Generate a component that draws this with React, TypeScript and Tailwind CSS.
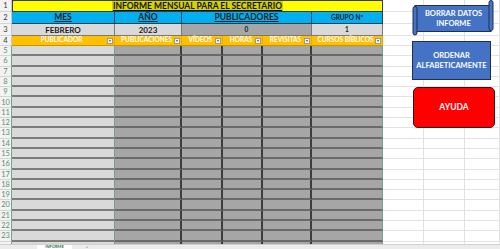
import React from "react"

const font = "font-['Lato','Liberation_Sans',sans-serif]"

const RowHead = ({ n, hi }: { n?: number; hi?: boolean }) => (
  <div
    className={
      hi
        ? "flex items-center justify-center bg-[#f3f3f3] border-b border-b-[#d4d4d4] border-r border-r-[#6fa585] text-[7.5px] text-[#5c8d72]"
        : "flex items-center justify-center bg-[#f3f3f3] border-b border-b-[#d4d4d4] border-r border-r-[#c6c6c6] text-[7.5px] text-[#3a3a3a]"
    }
  >
    {n}
  </div>
)

const White = () => <div className="bg-white border-b border-r border-[#e2e2e2]" />

const FilterBtn = () => (
  <span className="absolute right-[1px] top-1/2 -translate-y-1/2 w-[6px] h-[6px] bg-[#f2f2f2] border border-[#9a9a9a] flex items-center justify-center">
    <span className="block w-0 h-0 border-l-[1.5px] border-r-[1.5px] border-t-[2px] border-l-transparent border-r-transparent border-t-[#555]" />
  </span>
)

const OrangeHead = ({ label }: { label: string }) => (
  <div className="relative flex items-center justify-center pr-[3px] bg-[#ffc000] border-b border-b-[#c79600] border-r border-r-[#e8ad00] text-[6.5px] font-bold text-white leading-none">
    <span>{label}</span>
    <FilterBtn />
  </div>
)

const DataRow = ({ n }: { n?: number }) => (
  <>
    <RowHead n={n} hi />
    <div className="bg-[#d9d9d9] border-b-2 border-b-[#7b7b7b] border-r border-r-[#6fa585]" />
    <div className="bg-[#a6a6a6] border-b-2 border-b-[#6a6a6a] border-r-2 border-r-[#3c3c3c]" />
    <div className="bg-[#a6a6a6] border-b-2 border-b-[#6a6a6a] border-r-2 border-r-[#3c3c3c]" />
    <div className="bg-[#a6a6a6] border-b-2 border-b-[#6a6a6a] border-r-2 border-r-[#3c3c3c]" />
    <div className="bg-[#a6a6a6] border-b-2 border-b-[#6a6a6a] border-r-2 border-r-[#3c3c3c]" />
    <div className="bg-[#a6a6a6] border-b-2 border-b-[#6a6a6a] border-r border-r-[#6fa585]" />
    <White />
    <White />
    <White />
  </>
)

const rows = Array.from({ length: 19 }, (_, i) => i + 5)

export default function App() {
  return (
    <div className={`w-[500px] h-[249px] overflow-hidden bg-white flex flex-col ${font}`}>
      <div className="relative h-[244px] overflow-hidden">
        <div className="grid grid-cols-[12px_103px_67px_41px_40px_49px_71px_41px_41px_1fr] grid-rows-[12px_12px_12px_10px] auto-rows-[10.3px]">
          {/* row 1 */}
          <RowHead n={1} />
          <div className="col-span-6 flex items-center justify-center bg-[#ffff00] border border-[#3a3a3a]">
            <span className="h-full flex items-center px-[1px] bg-[#d4d400] text-[8.5px] font-bold underline text-[#111] leading-none">
              INFORME MENSUAL PARA EL SECRETARIO
            </span>
          </div>
          <White />
          <White />
          <White />

          {/* row 2 */}
          <RowHead n={2} />
          <div className="flex items-center justify-center bg-[#00b0f0] border-b border-r border-[#2c3e50] text-[8.5px] font-bold underline text-[#1a1a1a]">MES</div>
          <div className="flex items-center justify-center bg-[#00b0f0] border-b border-r border-[#2c3e50] text-[8.5px] font-bold underline text-[#1a1a1a]">AÑO</div>
          <div className="col-span-3 flex items-center justify-center bg-[#00b0f0] border-b border-r border-[#2c3e50] text-[8.5px] font-bold underline text-[#1a1a1a]">PUBLICADORES</div>
          <div className="flex items-center justify-center bg-[#00b0f0] border-b border-r border-[#2c3e50] text-[6.5px] font-bold text-[#1a1a1a]">GRUPO Nº</div>
          <White />
          <White />
          <White />

          {/* row 3 */}
          <RowHead n={3} />
          <div className="flex items-center justify-center bg-[#d9d9d9] border-b border-r border-[#7a7a7a] text-[8px] font-bold text-[#1a1a1a]">FEBRERO</div>
          <div className="flex items-center justify-center bg-[#d9d9d9] border-b border-r border-[#7a7a7a] text-[8px] font-bold text-[#1a1a1a]">2023</div>
          <div className="col-span-3 flex items-center justify-center bg-[#a6a6a6] border-b border-r border-[#7a7a7a] text-[6.5px] font-bold text-[#1a1a1a]">0</div>
          <div className="flex items-center justify-center bg-[#d9d9d9] border-b border-r border-[#7a7a7a] text-[6.5px] font-bold text-[#1a1a1a]">1</div>
          <White />
          <White />
          <White />

          {/* row 4 */}
          <RowHead n={4} />
          <OrangeHead label="PUBLICADOR" />
          <OrangeHead label="PUBLICACIONES" />
          <OrangeHead label="VÍDEOS" />
          <OrangeHead label="HORAS" />
          <OrangeHead label="REVISITAS" />
          <OrangeHead label="CURSOS BÍBLICOS" />
          <White />
          <White />
          <White />

          {rows.map((n) => (
            <DataRow key={n} n={n} />
          ))}
          <DataRow />
        </div>

        {/* floating shapes */}
        <div className="absolute left-[412px] top-0 w-[82px] h-[36px]">
          <svg width="82" height="36" viewBox="0 0 82 36" className="absolute inset-0">
            <rect x="3" y="5.5" width="76" height="26" fill="#4472c4" stroke="#1f2f4f" strokeWidth="1" />
            <rect x="77" y="0.5" width="4" height="30" rx="2" fill="#4472c4" stroke="#1f2f4f" strokeWidth="1" />
            <rect x="1" y="6.5" width="4" height="28.5" rx="2" fill="#4472c4" stroke="#1f2f4f" strokeWidth="1" />
          </svg>
          <div className="absolute left-[5px] right-[4px] top-[6px] bottom-[5px] flex flex-col items-center justify-center text-white text-[7.5px] font-bold leading-[10px]">
            <span>BORRAR DATOS</span>
            <span>INFORME</span>
          </div>
        </div>

        <div className="absolute left-[412px] top-[41px] w-[79px] h-[39px] bg-[#4472c4] border border-[#1f2f4f] flex flex-col items-center justify-center text-white text-[7.5px] font-bold leading-[10px]">
          <span>ORDENAR</span>
          <span>ALFABETICAMENTE</span>
        </div>

        <div className="absolute left-[413px] top-[87px] w-[82px] h-[41px] bg-[#ff0000] border border-[#3a1010] rounded-[5px] flex items-center justify-center text-white text-[8.5px] font-bold">
          AYUDA
        </div>
      </div>

      {/* sheet tabs */}
      <div className="h-[5px] bg-[#ececec] border-t border-[#d0d0d0] flex items-start">
        <div className="ml-[37px] w-[35px] h-full bg-white flex justify-center">
          <span className="text-[4px] font-bold text-[#217346] underline leading-[4px]">INFORME</span>
        </div>
        <div className="ml-[14px] text-[4px] text-[#777] leading-[4px]">+</div>
      </div>
    </div>
  )
}
